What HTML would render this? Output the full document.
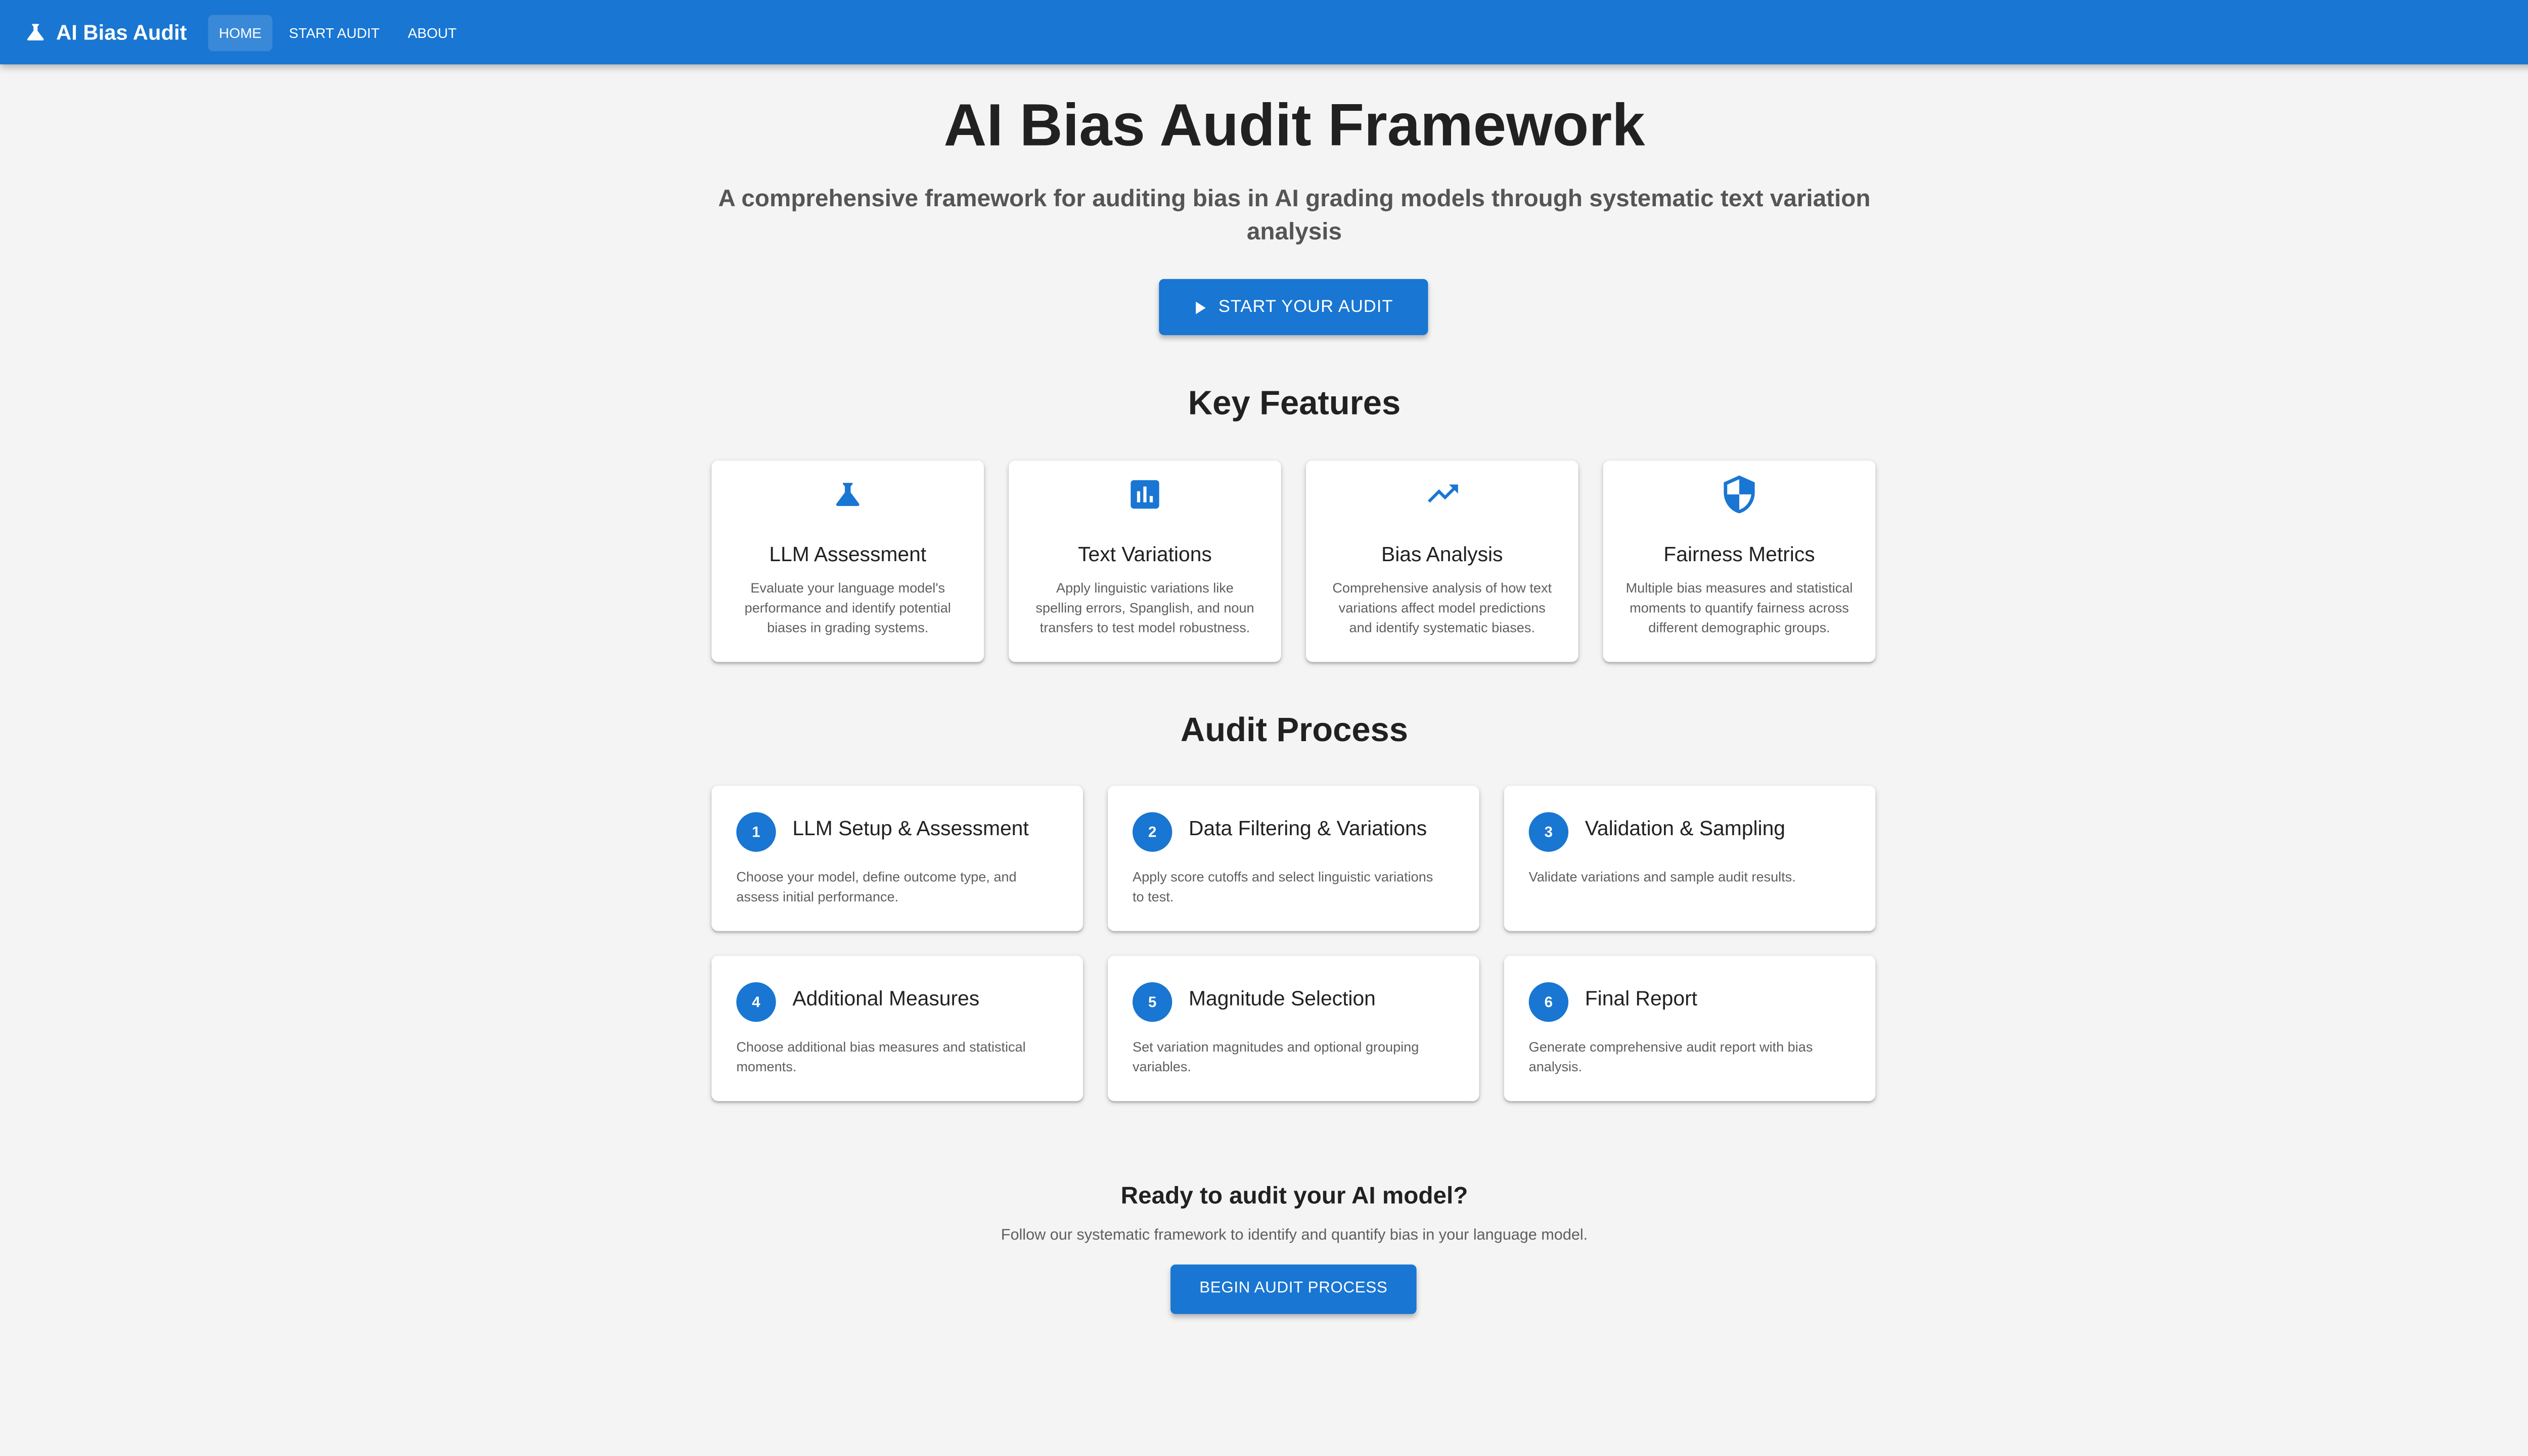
<!DOCTYPE html>
<html><head><meta charset="utf-8"><style>
html,body{margin:0;padding:0;width:5120px;height:2880px;overflow:hidden;background:#f4f4f4;}
#w{position:absolute;left:0;top:0;width:1568px;height:882px;transform:scale(3.265306);transform-origin:0 0;font-family:"Liberation Sans",Arial,sans-serif;color:#212121;}
.a{position:absolute;}
.nav{left:0;top:0;width:1568px;height:39px;background:#1976d2;box-shadow:0 2px 4px rgba(0,0,0,.25);}
.c{text-align:center;}
.card{position:absolute;background:#fff;border-radius:4px;box-shadow:0 1px 3px rgba(0,0,0,.2),0 1px 1px rgba(0,0,0,.14);}
.ft{position:absolute;left:0;width:165px;text-align:center;}
.ft .t{position:absolute;top:50px;width:165px;font-size:12.5px;}
.ft .d{position:absolute;top:71px;left:13px;width:139px;font-size:8.3px;line-height:12px;color:#5f5f5f;}
.pc .n{position:absolute;left:15px;top:16px;width:24px;height:24px;border-radius:50%;background:#1976d2;color:#fff;font-size:9px;font-weight:bold;text-align:center;line-height:24px;}
.pc .t{position:absolute;left:49px;top:19px;font-size:12.5px;white-space:nowrap;}
.pc .d{position:absolute;left:15px;top:49px;width:190px;font-size:8.3px;line-height:12px;color:#5f5f5f;}
</style></head><body><div id="w">
<div class="a nav"></div>
<svg class="a" style="left:14px;top:12px" width="15" height="15" viewBox="0 0 24 24"><path fill="#fff" d="M19.8 18.4 14 10.67V6.5l1.35-1.69c.26-.33.03-.81-.39-.81H9.04c-.42 0-.65.48-.39.81L10 6.5v4.17L4.2 18.4c-.49.66-.02 1.6.8 1.6h14c.82 0 1.29-.94.8-1.6z"/></svg>
<div class="a" style="left:34px;top:12px;font-size:12.8px;font-weight:bold;color:#fff">AI Bias Audit</div>
<div class="a" style="left:126px;top:9px;width:39px;height:22px;border-radius:3px;background:rgba(255,255,255,.14)"></div>
<div class="a" style="left:126px;top:15px;width:39px;text-align:center;font-size:8.6px;color:#fff">HOME</div>
<div class="a" style="left:175px;top:15px;font-size:8.6px;color:#fff">START AUDIT</div>
<div class="a" style="left:247px;top:15px;font-size:8.6px;color:#fff">ABOUT</div>

<div class="a c" style="left:0;width:1568px;top:55px;font-size:36px;font-weight:bold">AI Bias Audit Framework</div>
<div class="a c" style="left:420px;width:728px;top:111px;font-size:14.6px;line-height:20px;font-weight:bold;color:#555">A comprehensive framework for auditing bias in AI grading models through systematic text variation analysis</div>
<div class="a" style="left:702px;top:169px;width:163px;height:34px;background:#1976d2;border-radius:3px;box-shadow:0 2px 3px rgba(0,0,0,.25)"></div>
<svg class="a" style="left:720px;top:180px" width="13" height="13" viewBox="0 0 24 24"><path fill="#fff" d="M8 5v14l11-7z"/></svg>
<div class="a" style="left:738px;top:180px;font-size:10.6px;color:#fff;letter-spacing:.3px">START YOUR AUDIT</div>

<div class="a c" style="left:0;width:1568px;top:233px;font-size:20.5px;font-weight:bold">Key Features</div>

<div class="card ft" style="left:431px;top:279px;height:122px">
<svg class="a" style="left:72px;top:10px" width="21" height="21" viewBox="0 0 24 24"><path fill="#1976d2" d="M19.8 18.4 14 10.67V6.5l1.35-1.69c.26-.33.03-.81-.39-.81H9.04c-.42 0-.65.48-.39.81L10 6.5v4.17L4.2 18.4c-.49.66-.02 1.6.8 1.6h14c.82 0 1.29-.94.8-1.6z"/></svg>
<div class="t">LLM Assessment</div><div class="d">Evaluate your language model's performance and identify potential biases in grading systems.</div></div>
<div class="card ft" style="left:611px;top:279px;height:122px">
<svg class="a" style="left:71px;top:9px" width="23" height="23" viewBox="0 0 24 24"><path fill="#1976d2" d="M19 3H5c-1.1 0-2 .9-2 2v14c0 1.1.9 2 2 2h14c1.1 0 2-.9 2-2V5c0-1.1-.9-2-2-2zM9 17H7v-7h2v7zm4 0h-2V7h2v10zm4 0h-2v-4h2v4z"/></svg>
<div class="t">Text Variations</div><div class="d" style="left:16px;width:133px">Apply linguistic variations like spelling errors, Spanglish, and noun transfers to test model robustness.</div></div>
<div class="card ft" style="left:791px;top:279px;height:122px">
<svg class="a" style="left:72px;top:9px" width="22" height="22" viewBox="0 0 24 24"><path fill="#1976d2" d="M16 6l2.29 2.29-4.88 4.88-4-4L2 16.59 3.41 18l6-6 4 4 6.3-6.29L22 12V6z"/></svg>
<div class="t">Bias Analysis</div><div class="d">Comprehensive analysis of how text variations affect model predictions and identify systematic biases.</div></div>
<div class="card ft" style="left:971px;top:279px;height:122px">
<svg class="a" style="left:70px;top:8px" width="25" height="25" viewBox="0 0 24 24"><path fill="#1976d2" d="M12 1L3 5v6c0 5.55 3.84 10.74 9 12 5.16-1.26 9-6.45 9-12V5l-9-4zm0 10.99h7c-.53 4.12-3.28 7.79-7 8.94V12H5V6.3l7-3.11v8.8z"/></svg>
<div class="t">Fairness Metrics</div><div class="d">Multiple bias measures and statistical moments to quantify fairness across different demographic groups.</div></div>

<div class="a c" style="left:0;width:1568px;top:431px;font-size:20.5px;font-weight:bold">Audit Process</div>

<div class="card pc" style="left:431px;top:476px;width:225px;height:88px"><div class="n">1</div><div class="t">LLM Setup &amp; Assessment</div><div class="d">Choose your model, define outcome type, and assess initial performance.</div></div>
<div class="card pc" style="left:671px;top:476px;width:225px;height:88px"><div class="n">2</div><div class="t">Data Filtering &amp; Variations</div><div class="d">Apply score cutoffs and select linguistic variations to test.</div></div>
<div class="card pc" style="left:911px;top:476px;width:225px;height:88px"><div class="n">3</div><div class="t">Validation &amp; Sampling</div><div class="d">Validate variations and sample audit results.</div></div>
<div class="card pc" style="left:431px;top:579px;width:225px;height:88px"><div class="n">4</div><div class="t">Additional Measures</div><div class="d">Choose additional bias measures and statistical moments.</div></div>
<div class="card pc" style="left:671px;top:579px;width:225px;height:88px"><div class="n">5</div><div class="t">Magnitude Selection</div><div class="d">Set variation magnitudes and optional grouping variables.</div></div>
<div class="card pc" style="left:911px;top:579px;width:225px;height:88px"><div class="n">6</div><div class="t">Final Report</div><div class="d">Generate comprehensive audit report with bias analysis.</div></div>

<div class="a c" style="left:0;width:1568px;top:717px;font-size:14.6px;font-weight:bold">Ready to audit your AI model?</div>
<div class="a c" style="left:0;width:1568px;top:742px;font-size:9.4px;color:#5f5f5f">Follow our systematic framework to identify and quantify bias in your language model.</div>
<div class="a c" style="left:709px;top:766px;width:149px;height:30px;background:#1976d2;border-radius:3px;box-shadow:0 2px 3px rgba(0,0,0,.25);color:#fff;font-size:9.6px;line-height:30px;letter-spacing:.2px">BEGIN AUDIT PROCESS</div>
</div></body></html>
